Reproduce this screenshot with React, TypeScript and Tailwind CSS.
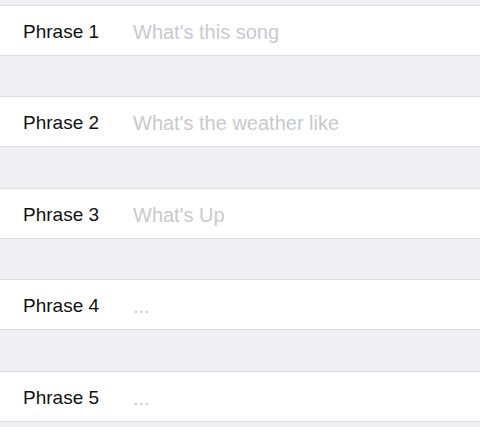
const phrases = [
  { label: 'Phrase 1', hint: "What's this song" },
  { label: 'Phrase 2', hint: "What's the weather like" },
  { label: 'Phrase 3', hint: "What's Up" },
  { label: 'Phrase 4', hint: '...' },
  { label: 'Phrase 5', hint: '...' },
];

export default function App() {
  return (
    <div className="w-[480px] h-[427px] overflow-hidden bg-[#efeff4] pt-[5px] font-['Liberation_Sans',Arial,sans-serif]">
      {phrases.map((p, i) => (
        <div
          key={p.label}
          className={
            'flex items-center h-[51px] bg-white border-y border-[#dcdce0] pl-[23px] pt-[3px] ' +
            (i === 0 ? '' : i % 2 === 1 ? 'mt-[40px]' : 'mt-[41px]')
          }
        >
          <span className="w-[110px] text-[19px] text-[#111]">{p.label}</span>
          <input
            placeholder={p.hint}
            className="flex-1 text-[20px] outline-none bg-transparent placeholder:text-[#c9c9ce]"
          />
        </div>
      ))}
    </div>
  );
}
